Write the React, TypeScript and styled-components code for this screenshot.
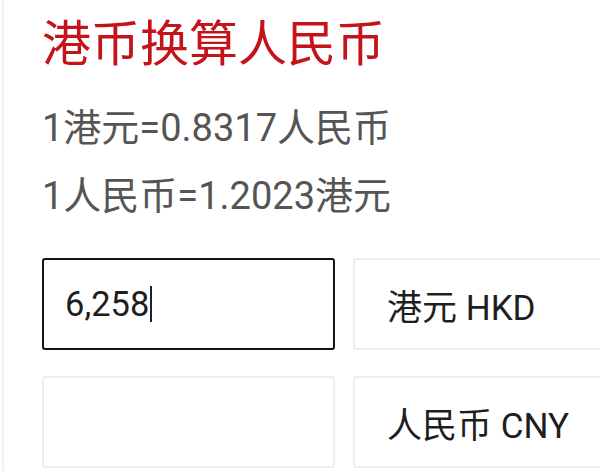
import React from "react";
import styled, { createGlobalStyle } from "styled-components";

const Global = createGlobalStyle`
  html, body { margin: 0; padding: 0; background: #ffffff; }
  body { font-family: Roboto, "Noto Sans CJK SC", "Noto Sans", sans-serif; overflow: hidden; }
`;

const Page = styled.div`
  width: 600px;
  height: 471px;
  box-sizing: border-box;
  margin-left: 2px;
  border-left: 2px solid #f1f1f1;
  padding: 12px 0 0 38px;
  overflow: hidden;
`;

const Title = styled.h1`
  margin: 0;
  font-family: "Noto Sans CJK SC", sans-serif;
  font-weight: 400;
  font-size: 49px;
  line-height: 56px;
  color: #c4131a;
`;

const Rate = styled.div<{ $first?: boolean }>`
  font-family: Roboto, "Noto Sans CJK SC", sans-serif;
  font-size: 38px;
  line-height: 44px;
  color: #555555;
  margin-top: ${(p) => (p.$first ? "38px" : "24px")};
`;

const Grid = styled.div`
  display: grid;
  grid-template-columns: 293px 280px;
  grid-auto-rows: 92px;
  column-gap: 18px;
  row-gap: 26px;
  margin-top: 40px;
`;

const Box = styled.div<{ $active?: boolean }>`
  box-sizing: border-box;
  border: 2px solid ${(p) => (p.$active ? "#151515" : "#eeeeee")};
  border-radius: 3px;
  background: #ffffff;
  display: flex;
  align-items: center;
  padding-left: ${(p) => (p.$active ? "21px" : "32px")};
  font-family: Roboto, "Noto Sans CJK SC", sans-serif;
  font-size: ${(p) => (p.$active ? "34.5px" : "35px")};
  color: #1e1e1e;
`;

const Caret = styled.span`
  display: inline-block;
  width: 2px;
  height: 36px;
  background: #222;
  margin-left: 1px;
  vertical-align: middle;
`;

export default function App() {
  return (
    <>
      <Global />
      <Page>
        <Title>港币换算人民币</Title>
        <Rate $first>1港元=0.8317人民币</Rate>
        <Rate>1人民币=1.2023港元</Rate>
        <Grid>
          <Box $active>
            6,258
            <Caret />
          </Box>
          <Box>港元 HKD</Box>
          <Box />
          <Box>人民币 CNY</Box>
        </Grid>
      </Page>
    </>
  );
}
